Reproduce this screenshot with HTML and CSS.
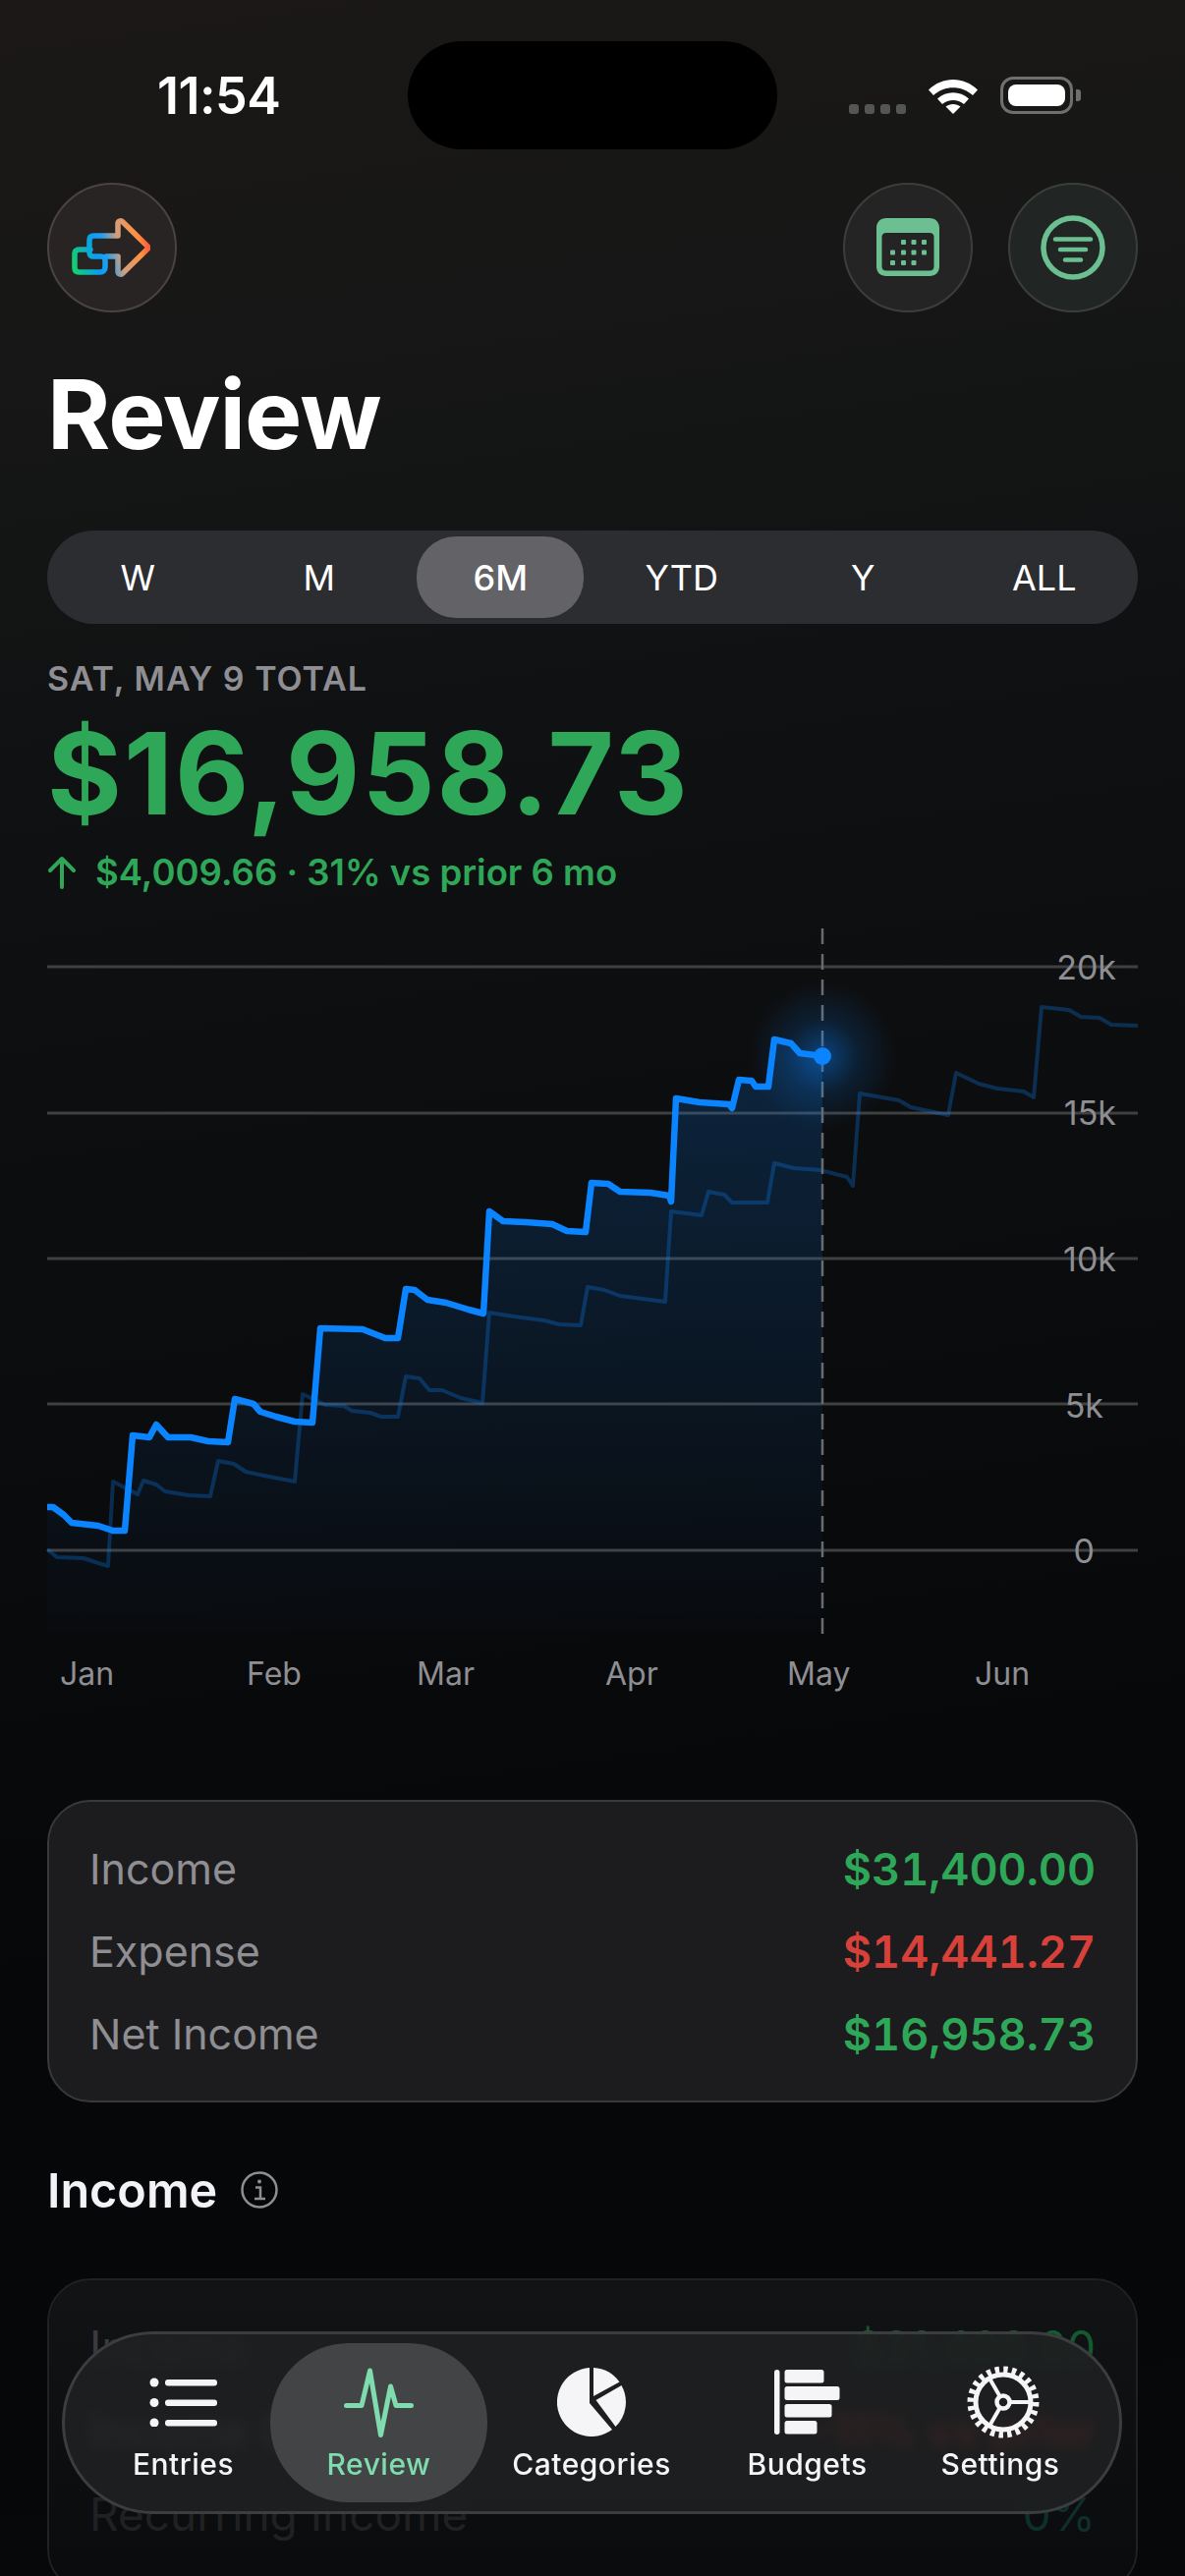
FILE: index.html
```html
<!DOCTYPE html>
<html lang="en">
<head>
    <meta charset="UTF-8">
    <meta name="viewport" content="width=device-width, initial-scale=1.0">
    <title>Review</title>
    <link rel="stylesheet" href="styles.css">
</head>
<body>
<div class="screen">
    <div class="status-bar">
        <span class="clock">11:54</span>
        <div class="island"></div>
        <div class="status-icons">
            <div class="signal"><i></i><i></i><i></i><i></i></div>
            <svg class="wifi" width="52" height="38" viewBox="0 0 52 38">
                <path d="M1 13.500C15 -0.500 37 -0.500 51 13.500L46 19C35 8.500 17 8.500 6 19Z" fill="#fff"/>
                <path d="M10 22.500C19 14 33 14 42 22.500L37 28C30.500 22.500 21.500 22.500 15 28Z" fill="#fff"/>
                <path d="M18.500 30.500C22.500 27 29.500 27 33.500 30.500L26 38Z" fill="#fff"/>
            </svg>
            <div class="battery"><div class="battery-fill"></div></div>
            <div class="battery-cap"></div>
        </div>
    </div>

    <div class="top-row">
        <div class="round-btn logo-btn">
            <svg width="80" height="62" viewBox="0 0 80 62" fill="none">
                <defs>
                    <linearGradient id="logo-grad" x1="0" y1="40" x2="80" y2="22" gradientUnits="userSpaceOnUse">
                        <stop offset="0" stop-color="#10d070"/>
                        <stop offset="0.3" stop-color="#0a9cf5"/>
                        <stop offset="0.42" stop-color="#20a0f0"/>
                        <stop offset="0.6" stop-color="#d0a080"/>
                        <stop offset="0.85" stop-color="#ff9040"/>
                        <stop offset="1" stop-color="#ff4a3a"/>
                    </linearGradient>
                </defs>
                <path d="M19 33H7.500C4.500 33 3 34.500 3 37.500V51.500C3 54.500 4.500 56 7.500 56H29C32 56 34 54 34 51V44C34 41.500 32 40 29.500 40H22C19.500 40 18 38.500 18 36V23.500C18 20.500 19.500 19 22.500 19H47V6.500C47 4 50 3 51.500 4.500L77 29.500C78 30.500 78 31.500 77 32.500L51.500 57.500C50 59 47 58 47 55.500V40H35" stroke="url(#logo-grad)" stroke-width="5.500" stroke-linejoin="round" stroke-linecap="round"/>
            </svg>
        </div>
        <div class="top-actions">
            <div class="round-btn">
                <svg width="64" height="60" viewBox="0 0 64 60">
                    <path fill-rule="evenodd" d="M10 0H54C60 0 64 4 64 10V49C64 55.500 60 59 54 59H10C4 59 0 55.500 0 49V10C0 4 4 0 10 0ZM10 15C7 15 5.500 17 5.500 19V49C5.500 52 7 53.500 10 53.500H54C57 53.500 58.500 52 58.500 49V19C58.500 17 57 15 54 15Z" fill="#6bbf90"/>
                    <g fill="#6bbf90">
                        <rect x="25" y="22" width="5" height="5" rx="1"/><rect x="35.500" y="22" width="5" height="5" rx="1"/><rect x="46" y="22" width="5" height="5" rx="1"/>
                        <rect x="14" y="32.500" width="5" height="5" rx="1"/><rect x="25" y="32.500" width="5" height="5" rx="1"/><rect x="35.500" y="32.500" width="5" height="5" rx="1"/><rect x="46" y="32.500" width="5" height="5" rx="1"/>
                        <rect x="14" y="43" width="5" height="5" rx="1"/><rect x="25" y="43" width="5" height="5" rx="1"/><rect x="35.500" y="43" width="5" height="5" rx="1"/>
                    </g>
                </svg>
            </div>
            <div class="round-btn green-btn">
                <svg width="66" height="66" viewBox="0 0 66 66" fill="none" stroke="#6bbf90" stroke-linecap="round">
                    <circle cx="33" cy="33" r="30" stroke-width="5.500"/>
                    <path d="M15 24.500H51M20 35H46M25 45.500H41" stroke-width="4.500"/>
                </svg>
            </div>
        </div>
    </div>

    <h1 class="page-title">Review</h1>

    <div class="range-picker">
        <span class="range-item">W</span>
        <span class="range-item">M</span>
        <span class="range-item selected">6M</span>
        <span class="range-item">YTD</span>
        <span class="range-item">Y</span>
        <span class="range-item">ALL</span>
    </div>

    <div class="total-label">SAT, MAY 9 TOTAL</div>
    <div class="total-value">$16,958.73</div>
    <div class="total-delta">
        <svg width="30" height="34" viewBox="0 0 30 34" fill="none" stroke="#2ea858" stroke-width="4" stroke-linecap="round" stroke-linejoin="round">
            <path d="M15 32V3M3 15L15 3L27 15"/>
        </svg>
        <span>$4,009.66 · 31% vs prior 6 mo</span>
    </div>

    <svg class="chart" width="1206" height="790" viewBox="0 940 1206 790">
        <defs>
            <linearGradient id="area-fill" x1="0" y1="1050" x2="0" y2="1660" gradientUnits="userSpaceOnUse">
                <stop offset="0" stop-color="#0a84ff" stop-opacity="0.2"/>
                <stop offset="1" stop-color="#0a84ff" stop-opacity="0.01"/>
            </linearGradient>
            <radialGradient id="glow">
                <stop offset="0" stop-color="#0a84ff" stop-opacity="0.45"/>
                <stop offset="0.5" stop-color="#0a84ff" stop-opacity="0.14"/>
                <stop offset="1" stop-color="#0a84ff" stop-opacity="0"/>
            </radialGradient>
        </defs>
        <g class="grid-lines">
            <path d="M48 984H1158M48 1133H1158M48 1281H1158M48 1429H1158M48 1578H1158"/>
        </g>
        <path d="M48 1534L54 1534L65 1542L73 1550L100 1553L115 1558L127 1558L135 1461L152 1463L159 1450L171 1463L194 1463L212 1467L232 1468L239 1424L258 1429L265 1437L281 1442L300 1447L318 1448L326 1352L369 1353L392 1362L405 1362L413 1312L422 1313L435 1323L454 1326L477 1333L492 1337L498 1233L512 1243L535 1244L562 1246L577 1253L596 1254L602 1204L619 1205L631 1213L662 1214L681 1217L683 1223L688 1118L712 1122L742 1124L745 1128L752 1099L765 1100L769 1106L782 1106L788 1058L805 1062L814 1072L837 1075V1660H48Z" fill="url(#area-fill)"/>
        <path class="line-prior" d="M48 1577L58 1585L85 1586L100 1591L110 1594L115 1508L140 1521L146 1507L159 1511L168 1518L192 1522L214 1523L222 1487L238 1490L250 1498L269 1502L300 1508L308 1419L331 1430L350 1431L358 1436L377 1438L388 1442L405 1442L413 1401L427 1403L437 1415L450 1415L469 1423L491 1428L498 1336L523 1340L554 1344L569 1348L591 1349L598 1310L615 1313L631 1319L677 1325L683 1233L714 1237L721 1213L737 1216L745 1224L781 1224L788 1184L808 1189L835 1191L862 1198L868 1207L875 1113L892 1116L915 1120L927 1127L965 1135L973 1092L996 1103L1015 1108L1042 1111L1052 1117L1060 1025L1088 1028L1100 1035L1119 1036L1131 1043L1158 1044"/>
        <path class="cursor-line" d="M837 945V1672"/>
        <circle cx="837" cy="1075" r="75" fill="url(#glow)"/>
        <path class="line-current" d="M48 1534L54 1534L65 1542L73 1550L100 1553L115 1558L127 1558L135 1461L152 1463L159 1450L171 1463L194 1463L212 1467L232 1468L239 1424L258 1429L265 1437L281 1442L300 1447L318 1448L326 1352L369 1353L392 1362L405 1362L413 1312L422 1313L435 1323L454 1326L477 1333L492 1337L498 1233L512 1243L535 1244L562 1246L577 1253L596 1254L602 1204L619 1205L631 1213L662 1214L681 1217L683 1223L688 1118L712 1122L742 1124L745 1128L752 1099L765 1100L769 1106L782 1106L788 1058L805 1062L814 1072L837 1075"/>
        <circle cx="837" cy="1075" r="9" fill="#0a84ff"/>
        <g class="axis-y">
            <text x="1136" y="997">20k</text>
            <text x="1136" y="1145">15k</text>
            <text x="1136" y="1294">10k</text>
            <text x="1123" y="1443">5k</text>
            <text x="1114" y="1591">0</text>
        </g>
        <g class="axis-x">
            <text x="61" y="1715">Jan</text>
            <text x="251" y="1715">Feb</text>
            <text x="424" y="1715">Mar</text>
            <text x="616" y="1715">Apr</text>
            <text x="801" y="1715">May</text>
            <text x="992" y="1715">Jun</text>
        </g>
    </svg>

    <div class="summary-card">
        <div class="summary-row"><span>Income</span><b class="pos">$31,400.00</b></div>
        <div class="summary-row"><span>Expense</span><b class="neg">$14,441.27</b></div>
        <div class="summary-row"><span>Net Income</span><b class="pos">$16,958.73</b></div>
    </div>

    <div class="section-head">
        <span>Income</span>
        <svg width="38" height="38" viewBox="0 0 38 38" fill="none" stroke="#8e8e93">
            <circle cx="19" cy="19" r="17.500" stroke-width="2.500"/>
            <path d="M15 16.500H20V28M14 28H25" stroke-width="2.500"/>
            <circle cx="19" cy="10.500" r="2" fill="#8e8e93" stroke="none"/>
        </svg>
    </div>

    <div class="income-card">
        <div class="income-row row-first"><span>Income</span><span>$31,400.00</span></div>
        <div class="income-row row-second"><span>Income Change</span><span>-11% vs prior</span></div>
        <div class="income-row row-third"><span>Recurring Income</span><span>0%</span></div>
    </div>

    <nav class="tab-bar">
        <div class="tab">
            <div class="tab-icon">
                <svg width="70" height="50" viewBox="0 0 70 50" fill="#f5f5f7">
                    <circle cx="5" cy="5" r="4.500"/><circle cx="5" cy="25.500" r="4.500"/><circle cx="5" cy="46" r="4.500"/>
                    <rect x="16" y="2" width="53" height="6.500" rx="3"/><rect x="16" y="22.500" width="53" height="6.500" rx="3"/><rect x="16" y="43" width="53" height="6.500" rx="3"/>
                </svg>
            </div>
            <span>Entries</span>
        </div>
        <div class="tab active">
            <div class="tab-icon">
                <svg width="71" height="73" viewBox="0 0 71 73" fill="none" stroke="#7fdcae" stroke-width="5" stroke-linecap="round" stroke-linejoin="round">
                    <path d="M2.500 39.500H18L26.500 4L37.500 69.500L47.500 20L53 39.500H68.500"/>
                </svg>
            </div>
            <span>Review</span>
        </div>
        <div class="tab">
            <div class="tab-icon">
                <svg width="70" height="70" viewBox="0 0 70 70" fill="#f5f5f7">
                    <path d="M33 0.100A35 35 0 1 0 56 63L33 36Z"/>
                    <path d="M37 0A35 35 0 0 1 63.500 14.500L37 29Z"/>
                    <path d="M39.500 33L65.500 18A35 35 0 0 1 59.500 60Z"/>
                </svg>
            </div>
            <span>Categories</span>
        </div>
        <div class="tab">
            <div class="tab-icon">
                <svg width="67" height="66" viewBox="0 0 67 66" fill="#f5f5f7">
                    <rect x="0" y="0" width="5.500" height="66" rx="2.700"/>
                    <rect x="10.500" y="0" width="40" height="13.500" rx="2.500"/>
                    <rect x="10.500" y="17" width="56" height="14" rx="2.500"/>
                    <rect x="10.500" y="35" width="48" height="13.500" rx="2.500"/>
                    <rect x="10.500" y="52" width="33" height="13.500" rx="2.500"/>
                </svg>
            </div>
            <span>Budgets</span>
        </div>
        <div class="tab">
            <div class="tab-icon settings-icon">
                <svg width="74" height="74" viewBox="-37 -37 74 74" fill="none" stroke="#f5f5f7">
                    <circle r="28" stroke-width="5"/>
                    <circle r="33" stroke-width="7" stroke-dasharray="4.400 4.239"/>
                    <circle r="6.500" stroke-width="4.500"/>
                    <path d="M6.500 0H28M-3.200 -5.600L-14 -24.200M-3.200 5.600L-14 24.200" stroke-width="4"/>
                </svg>
            </div>
            <span>Settings</span>
        </div>
    </nav>
</div>
</body>
</html>
```

FILE: styles.css
```css
* {
    box-sizing: border-box;
}

html, body {
    margin: 0;
    padding: 0;
}

body {
    width: 1206px;
    height: 2622px;
    overflow: hidden;
    background: #08090b;
    font-family: Inter, "Liberation Sans", sans-serif;
    color: #fff;
}

.screen {
    position: relative;
    width: 1206px;
    height: 2622px;
    padding: 0 48px;
    overflow: hidden;
    background: linear-gradient(172deg, #1b1817 0%, #161716 14%, #101112 28%, #0a0b0d 55%, #060709 75%, #07080a 100%);
}

/* status bar */
.status-bar {
    position: relative;
    display: flex;
    justify-content: space-between;
    align-items: center;
    height: 186px;
    padding: 8px 0 0 112px;
}

.clock {
    font-size: 52px;
    font-weight: 600;
    letter-spacing: -0.5px;
}

.island {
    position: absolute;
    left: 367px;
    top: 42px;
    width: 376px;
    height: 110px;
    border-radius: 55px;
    background: #000;
}

.status-icons {
    display: flex;
    align-items: center;
    margin-right: 58px;
}

.signal {
    display: flex;
    gap: 6px;
    margin: 28px 22px 0 0;
}

.signal i {
    display: block;
    width: 10px;
    height: 10px;
    border-radius: 3px;
    background: #545655;
}

.wifi {
    margin-right: 22px;
}

.battery {
    width: 74px;
    height: 38px;
    padding: 5px;
    border: 3px solid #6e6f6e;
    border-radius: 13px;
}

.battery-fill {
    width: 100%;
    height: 100%;
    border-radius: 8px;
    background: #fff;
}

.battery-cap {
    width: 5px;
    height: 12px;
    margin-left: 3px;
    border-radius: 0 3px 3px 0;
    background: #6e6f6e;
}

/* top buttons */
.top-row {
    display: flex;
    justify-content: space-between;
}

.top-actions {
    display: flex;
    gap: 36px;
}

.round-btn {
    display: flex;
    align-items: center;
    justify-content: center;
    width: 132px;
    height: 132px;
    border: 2px solid #3b3e3b;
    border-radius: 50%;
    background: #232423;
}

.logo-btn {
    border-color: #4a4341;
    background: #282423;
}

.logo-btn svg {
    margin-right: 2px;
}

.green-btn {
    background: #212523;
}

.page-title {
    margin: 46px 0 0;
    font-size: 98px;
    line-height: 116px;
    font-weight: 700;
    letter-spacing: -1px;
}

/* range picker */
.range-picker {
    display: grid;
    grid-template-columns: repeat(6, 184.500px);
    align-items: center;
    height: 95px;
    margin-top: 60px;
    border-radius: 48px;
    background: #2c2d30;
}

.range-item {
    display: flex;
    align-items: center;
    justify-content: center;
    height: 83px;
    font-size: 36px;
    font-weight: 400;
}

.range-item.selected {
    width: 170px;
    justify-self: center;
    border-radius: 40px;
    background: #636367;
    font-weight: 500;
}

.total-label {
    margin-top: 36px;
    font-size: 34px;
    line-height: 40px;
    font-weight: 600;
    letter-spacing: 1px;
    color: #8e8e93;
}

.total-value {
    margin-top: 15px;
    font-size: 116px;
    line-height: 122px;
    font-weight: 700;
    letter-spacing: 2px;
    color: #2ea858;
}

.total-delta {
    display: flex;
    align-items: center;
    gap: 19px;
    margin-top: 18px;
    font-size: 36.500px;
    line-height: 44px;
    font-weight: 600;
    color: #2ea858;
}

/* chart */
.chart {
    display: block;
    margin: 30px -48px 0;
}

.grid-lines path {
    fill: none;
    stroke: #3f4041;
    stroke-width: 3;
}

.line-prior {
    fill: none;
    stroke: #0a84ff;
    stroke-opacity: 0.28;
    stroke-width: 4;
    stroke-linejoin: round;
}

.line-current {
    fill: none;
    stroke: #0a84ff;
    stroke-width: 6.500;
    stroke-linejoin: round;
}

.cursor-line {
    fill: none;
    stroke: #6a6b6d;
    stroke-width: 2.500;
    stroke-dasharray: 16 10;
}

.axis-y text {
    font-size: 34px;
    fill: #8e8e93;
    text-anchor: end;
}

.axis-x text {
    font-size: 32px;
    fill: #8e8e93;
}

/* summary card */
.summary-card {
    display: flex;
    flex-direction: column;
    gap: 26px;
    height: 308px;
    margin-top: 102px;
    padding: 39px 41px;
    border: 2px solid #38393b;
    border-radius: 44px;
    background: #1c1c1e;
}

.summary-row {
    display: flex;
    justify-content: space-between;
    align-items: center;
    height: 58px;
    font-size: 43px;
    color: #8e8e93;
}

.summary-row b {
    font-weight: 600;
    font-size: 45px;
    font-variant-numeric: tabular-nums;
}

.pos {
    color: #2ea858;
}

.neg {
    color: #d8413a;
}

.section-head {
    display: flex;
    align-items: center;
    gap: 24px;
    margin-top: 59px;
    height: 60px;
    font-size: 48.500px;
    font-weight: 600;
    color: #f2f2f7;
}

/* faded list that runs under the tab bar */
.income-card {
    height: 320px;
    margin-top: 60px;
    padding: 25px 41px;
    border: 2px solid #202123;
    border-radius: 44px;
    background: linear-gradient(180deg, #121315, #0a0b0c);
}

.income-row {
    display: flex;
    justify-content: space-between;
    align-items: center;
    height: 85px;
    font-size: 46px;
}

.row-first {
    color: #3a3b3d;
}

.row-first span:last-child {
    color: #145a2f;
}

.row-second {
    color: #6a6a6e;
}

.row-second span:last-child {
    color: #b02c28;
    font-weight: 700;
}

.row-third {
    color: #1f2123;
}

.row-third span:last-child {
    color: #0f2f2a;
}

/* floating tab bar over the list */
.tab-bar {
    position: absolute;
    left: 63px;
    top: 2373px;
    display: grid;
    grid-template-columns: 177px 221px 212px 227px 166px;
    align-items: center;
    width: 1079px;
    height: 186px;
    padding-left: 32px;
    border: 3px solid #3c3d40;
    border-radius: 93px;
    background: rgba(32, 33, 34, 0.86);
    backdrop-filter: blur(7px);
}

.tab {
    display: flex;
    flex-direction: column;
    align-items: center;
    gap: 7px;
    height: 162px;
    padding-top: 22px;
    font-size: 30px;
    line-height: 36px;
    font-weight: 500;
    letter-spacing: 0.5px;
    color: #f5f5f7;
}

.tab-icon {
    display: flex;
    align-items: center;
    justify-content: center;
    height: 76px;
}

.settings-icon {
    margin-left: 6px;
}

.tab.active {
    border-radius: 80px;
    background: #434446;
    color: #7fdcae;
}
```
